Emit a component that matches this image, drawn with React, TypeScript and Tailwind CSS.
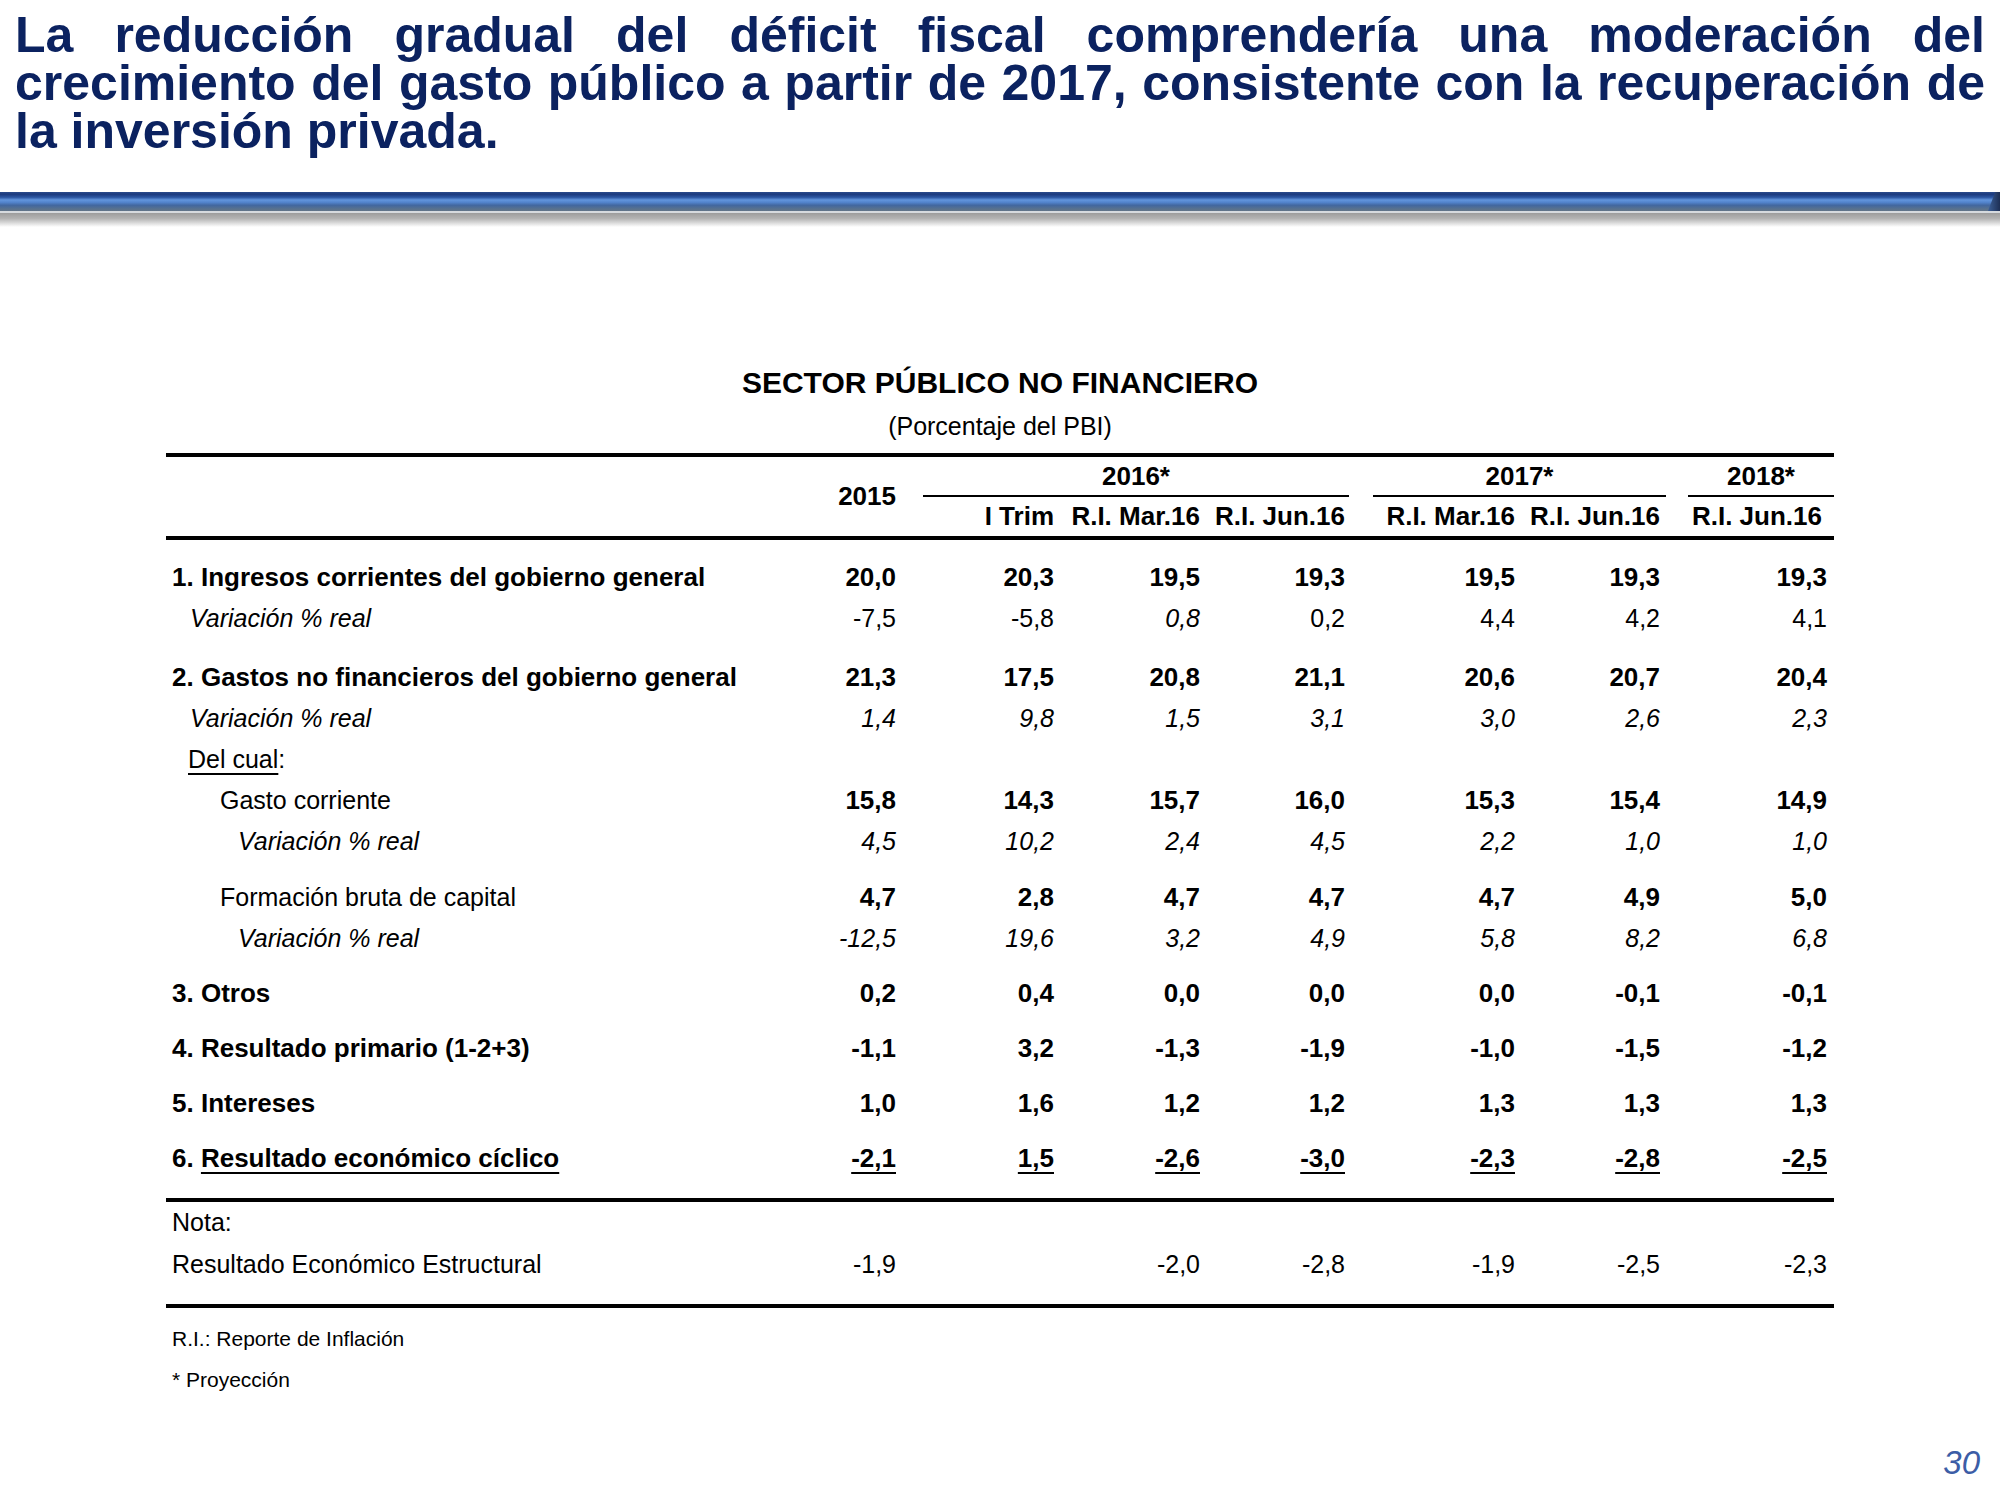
import type { ReactNode } from "react";

// Column template shared by header, body and note rows (total 1668px).
const GRID =
  "grid grid-cols-[605px_132px_158px_146px_145px_170px_145px_167px]";

type Row = {
  label: ReactNode;
  labelCls: string;
  vals: string[];
  valCls: string;
  it?: number[];
  h: string;
  mt?: string;
  u?: boolean;
};

const ALL = [0, 1, 2, 3, 4, 5, 6];

const ROWS: Row[] = [
  {
    label: "1. Ingresos corrientes del gobierno general",
    labelCls: "pl-[6px] font-bold text-[26px]",
    vals: ["20,0", "20,3", "19,5", "19,3", "19,5", "19,3", "19,3"],
    valCls: "font-bold text-[26px]",
    h: "h-[41px]",
    mt: "mt-[17px]",
  },
  {
    label: "Variación % real",
    labelCls: "pl-[24px] italic text-[25px]",
    vals: ["-7,5", "-5,8", "0,8", "0,2", "4,4", "4,2", "4,1"],
    valCls: "text-[25px]",
    it: [2],
    h: "h-[41px]",
  },
  {
    label: "2. Gastos no financieros del gobierno general",
    labelCls: "pl-[6px] font-bold text-[26px]",
    vals: ["21,3", "17,5", "20,8", "21,1", "20,6", "20,7", "20,4"],
    valCls: "font-bold text-[26px]",
    h: "h-[41px]",
    mt: "mt-[18px]",
  },
  {
    label: "Variación % real",
    labelCls: "pl-[24px] italic text-[25px]",
    vals: ["1,4", "9,8", "1,5", "3,1", "3,0", "2,6", "2,3"],
    valCls: "text-[25px]",
    it: ALL,
    h: "h-[41px]",
  },
  {
    label: (
      <>
        <span className="underline decoration-2 underline-offset-[5px]">Del cual</span>:
      </>
    ),
    labelCls: "pl-[22px] text-[25px]",
    vals: [],
    valCls: "",
    h: "h-[41px]",
  },
  {
    label: "Gasto corriente",
    labelCls: "pl-[54px] text-[25px]",
    vals: ["15,8", "14,3", "15,7", "16,0", "15,3", "15,4", "14,9"],
    valCls: "font-bold text-[26px]",
    h: "h-[41px]",
  },
  {
    label: "Variación % real",
    labelCls: "pl-[72px] italic text-[25px]",
    vals: ["4,5", "10,2", "2,4", "4,5", "2,2", "1,0", "1,0"],
    valCls: "text-[25px]",
    it: ALL,
    h: "h-[41px]",
  },
  {
    label: "Formación bruta de capital",
    labelCls: "pl-[54px] text-[25px]",
    vals: ["4,7", "2,8", "4,7", "4,7", "4,7", "4,9", "5,0"],
    valCls: "font-bold text-[26px]",
    h: "h-[41px]",
    mt: "mt-[15px]",
  },
  {
    label: "Variación % real",
    labelCls: "pl-[72px] italic text-[25px]",
    vals: ["-12,5", "19,6", "3,2", "4,9", "5,8", "8,2", "6,8"],
    valCls: "text-[25px]",
    it: ALL,
    h: "h-[41px]",
  },
  {
    label: "3. Otros",
    labelCls: "pl-[6px] font-bold text-[26px]",
    vals: ["0,2", "0,4", "0,0", "0,0", "0,0", "-0,1", "-0,1"],
    valCls: "font-bold text-[26px]",
    h: "h-[55px]",
    mt: "mt-[7px]",
  },
  {
    label: "4. Resultado primario (1-2+3)",
    labelCls: "pl-[6px] font-bold text-[26px]",
    vals: ["-1,1", "3,2", "-1,3", "-1,9", "-1,0", "-1,5", "-1,2"],
    valCls: "font-bold text-[26px]",
    h: "h-[55px]",
  },
  {
    label: "5. Intereses",
    labelCls: "pl-[6px] font-bold text-[26px]",
    vals: ["1,0", "1,6", "1,2", "1,2", "1,3", "1,3", "1,3"],
    valCls: "font-bold text-[26px]",
    h: "h-[55px]",
  },
  {
    label: (
      <>
        6. <span className="underline decoration-2 underline-offset-[5px]">Resultado económico cíclico</span>
      </>
    ),
    labelCls: "pl-[6px] font-bold text-[26px]",
    vals: ["-2,1", "1,5", "-2,6", "-3,0", "-2,3", "-2,8", "-2,5"],
    valCls: "font-bold text-[26px]",
    h: "h-[55px]",
    u: true,
  },
];

function DataRow({ row }: { row: Row }) {
  return (
    <div className={`${GRID} ${row.h} ${row.mt ?? ""}`}>
      <div className={`flex items-center whitespace-nowrap ${row.labelCls}`}>
        {/* Wrapped so the space after "6." is not trimmed as a flex item edge. */}
        <span>{row.label}</span>
      </div>
      {row.vals.map((v, i) => (
        <div
          key={i}
          className={`flex items-center justify-end pr-[7px] ${row.valCls} ${
            row.it?.includes(i) ? "italic" : ""
          }`}
        >
          {row.u ? (
            <span className="underline decoration-2 underline-offset-[5px]">{v}</span>
          ) : (
            v
          )}
        </div>
      ))}
    </div>
  );
}

function Rule({ mt }: { mt: string }) {
  return <div className={`h-[4px] bg-black ${mt}`} />;
}

export default function App() {
  return (
    <div className="flex h-[1500px] w-[2000px] flex-col bg-white font-['Liberation_Sans',Arial,sans-serif] text-black">
      {/* Slide title, justified over three lines. */}
      <div className="px-[15px] pt-[11px] text-[50px] font-bold leading-[48px] text-[#0b2260]">
        <div className="text-justify [text-align-last:justify]">
          La reducción gradual del déficit fiscal comprendería una moderación del
        </div>
        <div className="text-justify [text-align-last:justify]">
          crecimiento del gasto público a partir de 2017, consistente con la recuperación de
        </div>
        <div>la inversión privada.</div>
      </div>

      {/* Blue bar with its drop shadow. */}
      <div className="relative mt-[37px] h-[19px] bg-[linear-gradient(to_bottom,#2a4a8a_0%,#1b3a7e_12%,#2b56a2_28%,#6295dd_42%,#5283cb_55%,#42679f_70%,#57718f_88%,#627488_100%)]">
        <div className="absolute right-0 top-0 h-[19px] w-[12px] bg-[linear-gradient(to_right,#3c5f96,#1d2f55)] [clip-path:polygon(60%_0,100%_0,100%_100%,0_100%)]" />
      </div>
      <div className="h-[2px] bg-[#d6dade]" />
      <div className="h-[14px] bg-[linear-gradient(to_bottom,#9c9c9c,#b4b4b4_40%,#ffffff)]" />

      {/* Table. */}
      <div className="mx-auto mt-[138px] w-[1668px]">
        <div className="text-center text-[30px] font-bold leading-[36px]">
          SECTOR PÚBLICO NO FINANCIERO
        </div>
        <div className="mt-[10px] text-center text-[25px] leading-[30px]">
          (Porcentaje del PBI)
        </div>

        <Rule mt="mt-[12px]" />
        <div className={`${GRID} grid-rows-[40px_39px] text-[26px] font-bold`}>
          <div className="row-span-2" />
          <div className="row-span-2 flex items-center justify-end pr-[7px]">2015</div>
          <div className="col-span-3 ml-[20px] mr-[3px] flex items-center justify-center border-b-2 border-black">
            2016*
          </div>
          <div className="col-span-2 ml-[21px] mr-[1px] flex items-center justify-center border-b-2 border-black">
            2017*
          </div>
          <div className="ml-[21px] flex items-center justify-center border-b-2 border-black">
            2018*
          </div>
          <div className="flex items-center justify-end pr-[7px]">I Trim</div>
          <div className="flex items-center justify-end pr-[7px]">R.I. Mar.16</div>
          <div className="flex items-center justify-end pr-[7px]">R.I. Jun.16</div>
          <div className="flex items-center justify-end pr-[7px]">R.I. Mar.16</div>
          <div className="flex items-center justify-end pr-[7px]">R.I. Jun.16</div>
          <div className="flex items-center justify-end pr-[12px]">R.I. Jun.16</div>
        </div>
        <Rule mt="mt-0" />

        {ROWS.map((r, i) => (
          <DataRow key={i} row={r} />
        ))}

        <Rule mt="mt-[12px]" />
        <div className="flex h-[42px] items-center pl-[6px] text-[25px]">Nota:</div>
        <DataRow
          row={{
            label: "Resultado Económico Estructural",
            labelCls: "pl-[6px] text-[25px]",
            vals: ["-1,9", "", "-2,0", "-2,8", "-1,9", "-2,5", "-2,3"],
            valCls: "text-[25px]",
            h: "h-[41px]",
          }}
        />
        <Rule mt="mt-[19px]" />

        <div className="mt-[10px] text-[21px]">
          <div className="flex h-[41px] items-center pl-[6px]">R.I.: Reporte de Inflación</div>
          <div className="flex h-[41px] items-center pl-[6px]">* Proyección</div>
        </div>
      </div>

      {/* Page number. */}
      <div className="mb-[17px] mt-auto flex h-[40px] items-center justify-end pr-[20px] text-[33px] italic text-[#3c5da6]">
        30
      </div>
    </div>
  );
}
